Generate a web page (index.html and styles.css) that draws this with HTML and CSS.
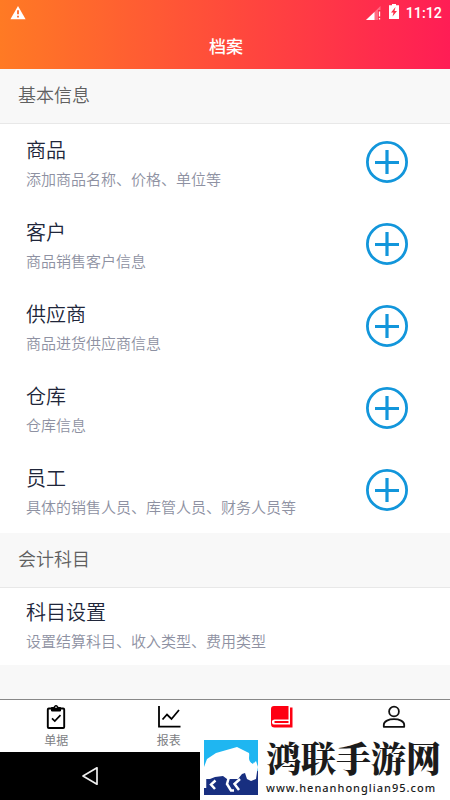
FILE: index.html
```html
<!DOCTYPE html>
<html lang="zh-CN">
<head>
<meta charset="utf-8">
<title>档案</title>
<link rel="stylesheet" href="styles.css">
</head>
<body>
<svg class="defs" aria-hidden="true">
  <symbol id="add" viewBox="0 0 42 42"><circle cx="21" cy="21" r="19.6" fill="none" stroke="#1296db" stroke-width="2.8"/><path d="M21 9v24M9 21.500h24" stroke="#1296db" stroke-width="3.200"/></symbol>
</svg>
<div class="screen">
  <header class="header">
    <div class="status">
      <svg class="warn" width="16" height="14" viewBox="0 0 16 14"><path d="M8 0 15.600 13.300H.400Z" fill="#fff"/><path d="M8 4.300v4M8 9.700v1.800" stroke="#ff6a2b" stroke-width="1.800"/></svg>
      <div class="status-right">
        <svg width="16" height="14" viewBox="0 0 16 14"><path d="M0 14 14.500 0v14Z" fill="#fff" opacity=".3"/><path d="M0 14 8.500 6v8Z" fill="#fff"/><path d="M12 4h3v10h-3Z" fill="#fc2f4c"/><path d="M13.500 5.500v5M13.500 12v1.500" stroke="#fff" stroke-width="1.300"/></svg>
        <svg width="10" height="15" viewBox="0 0 10 15"><path d="M0 1.300h3V0h4v1.300h3V15H0Z" fill="#fff"/><path d="M6.500 3 2 8.500h2.500L3.500 12.500 8 7H5.500Z" fill="#fb3048"/></svg>
        <span class="time">11:12</span>
      </div>
    </div>
    <h1 class="title">档案</h1>
  </header>
  <main class="content">
    <h2 class="section">基本信息</h2>
    <ul class="list">
      <li class="item"><div><h3>商品</h3><p>添加商品名称、价格、单位等</p></div><svg class="add"><use href="#add"/></svg></li>
      <li class="item"><div><h3>客户</h3><p>商品销售客户信息</p></div><svg class="add"><use href="#add"/></svg></li>
      <li class="item"><div><h3>供应商</h3><p>商品进货供应商信息</p></div><svg class="add"><use href="#add"/></svg></li>
      <li class="item"><div><h3>仓库</h3><p>仓库信息</p></div><svg class="add"><use href="#add"/></svg></li>
      <li class="item"><div><h3>员工</h3><p>具体的销售人员、库管人员、财务人员等</p></div><svg class="add"><use href="#add"/></svg></li>
    </ul>
    <h2 class="section">会计科目</h2>
    <ul class="list short">
      <li class="item"><div><h3>科目设置</h3><p>设置结算科目、收入类型、费用类型</p></div></li>
    </ul>
  </main>
  <nav class="tabs">
    <a class="tab"><svg width="24" height="26" viewBox="0 0 24 26" fill="none" stroke="#000"><rect x="3.800" y="4.500" width="16.400" height="19.500" rx="1" stroke-width="1.900"/><path d="M7.500 3.500H10a2 2 0 0 1 4 0h2.500V7h-9Z" fill="#000" stroke-width="1"/><circle cx="12" cy="3.200" r=".8" fill="#fff" stroke="none"/><path d="m8 14.300 2.800 2.800 5.700-6" stroke-width="1.700"/></svg><span>单据</span></a>
    <a class="tab"><svg width="24" height="26" viewBox="0 0 24 26" fill="none" stroke="#000"><path d="M2 2v20.600h21.500" stroke-width="1.800"/><path d="m5.500 15.500 4.500-5 4.500 4.500L22 6" stroke-width="1.800"/></svg><span>报表</span></a>
    <a class="tab"><svg width="24" height="26" viewBox="0 0 24 26"><path d="M5 2h14.500v13.500H5.500q-2 0-2.500 1.500V19q.5 1.500 2 1.500h16V3.500h2.500v20h-18q-3.500 0-3.500-3.500V5q0-3 3-3Z" fill="#fe0012"/><path d="M5.500 17h14v2h-14Z" fill="#fe0012"/></svg></a>
    <a class="tab"><svg width="24" height="26" viewBox="0 0 24 26" fill="none" stroke="#111" stroke-width="1.800"><circle cx="12" cy="7.500" r="4.900"/><path d="M1.800 22.800v-2c0-7.500 20.400-7.500 20.400 0v2Z" stroke-linejoin="round"/></svg></a>
  </nav>
  <footer class="bottom">
    <div class="navbar"><svg width="18" height="20" viewBox="0 0 18 20"><path d="M16 1.800v16.400L2 10Z" fill="none" stroke="#eee" stroke-width="1.700" stroke-linejoin="round"/></svg></div>
    <div class="brand">
      <svg class="logo" width="54" height="55" viewBox="0 0 54 55">
        <path fill="#1fb6f1" d="M0 0h54v55H0z"/><path fill="#182f80" d="M0 31h54v24H0z"/>
        <path fill="#fff" d="M0 27 3 19l9-6L33 7l12 6 1 6 4 4 2-2 2 6-1 5-1 7-5 2-4-2-2-6-3 1-4 5H23l-4-3-8 1-5 2H0Z"/>
        <path fill="#1fb6f1" d="M48 12q-2 4 1 6 2 2 0 6-4-2-4-6 0-4 3-6Z"/>
        <path fill="none" stroke="#fff" stroke-width="2.500" d="M1 38v10M11.500 40.500 7 44.500l4 4.500M25 37l-2 7 4 6.500h3M36 39l-5.500 5 4.500 6"/>
      </svg>
      <div class="brand-text"><strong>鸿联手游网</strong><span>www.henanhonglian95.com</span></div>
    </div>
  </footer>
</div>
</body>
</html>
```

FILE: styles.css
```css
* { box-sizing: border-box; margin: 0; padding: 0; }
body { width: 450px; height: 800px; overflow: hidden; background: #fff; font-family: "Noto Sans CJK SC", sans-serif; }
.defs { display: none; }
.screen { display: flex; flex-direction: column; height: 800px; }
.header { height: 69px; background: linear-gradient(90deg, #ff7a24, #ff4b3b 50%, #ff1d55); color: #fff; }
.status { display: flex; justify-content: space-between; height: 26px; padding: 4px 8px 0 10px; }
.warn { margin-top: 2px; }
.status-right { display: flex; align-items: flex-start; }
.status-right svg:first-child { margin: 2px 7px 0 0; }
.time { margin-left: 7px; font: 500 14.300px/18px Roboto, sans-serif; }
.title { font-size: 17px; line-height: 40px; font-weight: 500; text-align: center; padding-left: 2px; }
.content { flex: 1; background: #f8f8f8; }
.section { height: 55px; padding-left: 18px; border-bottom: 1px solid #e8e8e8; font-size: 18px; line-height: 51px; font-weight: 350; color: #606060; }
.list { list-style: none; background: #fff; height: 409px; }
.short { height: 77px; }
.item { display: flex; justify-content: space-between; height: 82px; padding: 11px 42px 0 26px; }
.short .item { padding-top: 9px; }
.item h3 { font-size: 20px; line-height: 30px; font-weight: 350; color: #20263a; }
.item p { font-size: 15px; line-height: 22px; margin-top: 3px; font-weight: 350; color: #8e91a2; }
.add { width: 42px; height: 42px; margin-top: 6px; }
.tabs { display: flex; height: 53px; border-top: 1px solid #888; background: #fff; }
.tab { flex: 1; display: flex; flex-direction: column; align-items: center; padding-top: 4px; font-size: 12px; line-height: 18px; color: #7c7e83; }
.tab span { margin-top: 1px; }
.bottom { display: flex; height: 48px; background: #fff; }
.navbar { width: 200px; background: #000; padding: 14px 0 0 81px; }
.brand { display: flex; margin-top: -12px; padding-left: 4px; position: relative; }
.brand-text { display: flex; flex-direction: column; padding-left: 8px; color: #1b1b1b; }
.brand-text strong { font-family: "Noto Serif CJK SC", "Noto Sans CJK SC", serif; font-size: 35px; line-height: 35px; font-weight: 900; white-space: nowrap; }
.brand-text span { font: 500 11px/14px "Noto Sans", sans-serif; letter-spacing: 1px; margin-top: 6px; }
```
